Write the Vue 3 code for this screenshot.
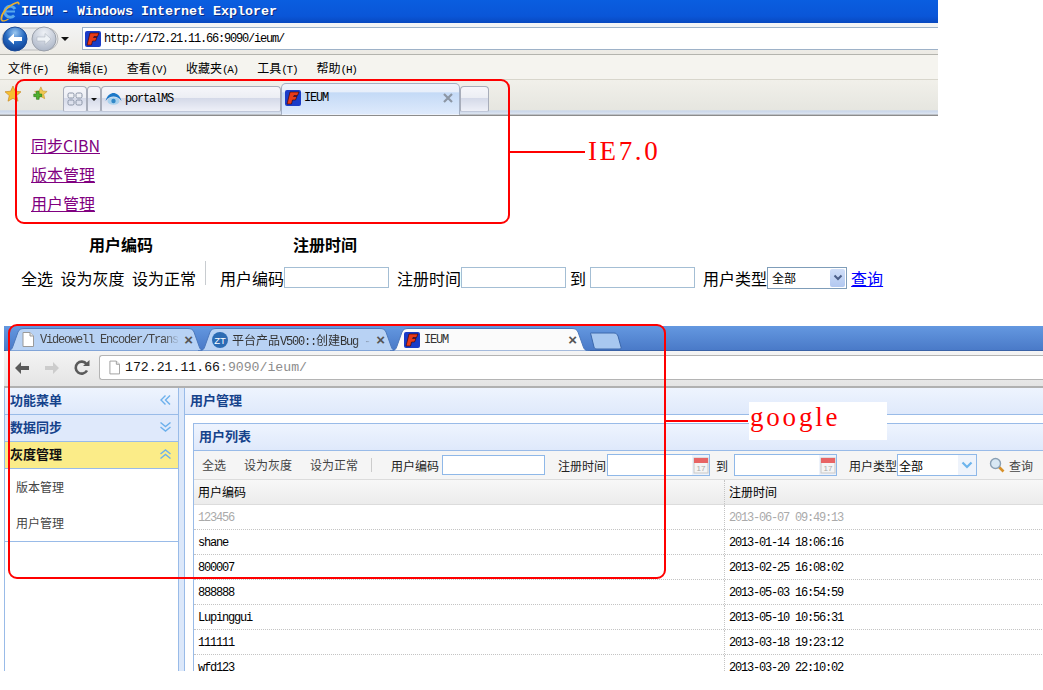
<script setup>
const ieMenu = [
  { name: "文件", key: "F" },
  { name: "编辑", key: "E" },
  { name: "查看", key: "V" },
  { name: "收藏夹", key: "A" },
  { name: "工具", key: "T" },
  { name: "帮助", key: "H" },
];

const ieLinks = ["同步CIBN", "版本管理", "用户管理"];

const users = [
  { code: "123456", time: "2013-06-07 09:49:13", gray: true },
  { code: "shane", time: "2013-01-14 18:06:16" },
  { code: "800007", time: "2013-02-25 16:08:02" },
  { code: "888888", time: "2013-05-03 16:54:59" },
  { code: "Lupinggui", time: "2013-05-10 10:56:31" },
  { code: "111111", time: "2013-03-18 19:23:12" },
  { code: "wfd123", time: "2013-03-20 22:10:02" },
];
</script>

<template>
  <div class="page">
    <!-- IE7 -->
    <div class="ie">
      <div class="ie-title">
        <svg width="20" height="22" viewBox="0 0 20 22">
          <path d="M15 8a5.500 5.500 0 1 0-.8 6.500" fill="none" stroke="#58a8ec" stroke-width="3" />
          <path d="M5.500 10.500h9.500" stroke="#58a8ec" stroke-width="2" />
          <path d="M1.500 19C.5 14 6 5 17 1.500c1.500-.4 2 .8 1.500 2" fill="none" stroke="#e8b030" stroke-width="1.800" />
          <path d="M1.500 19c1 1.500 4 1 7-1" fill="none" stroke="#e8b030" stroke-width="1.400" />
        </svg>
        <span class="ie-title-text">IEUM - Windows Internet Explorer</span>
      </div>
      <div class="ie-nav">
        <div class="orbs">
          <svg width="58" height="28" viewBox="0 0 58 28">
            <defs>
              <radialGradient id="orbBlue" cx="50%" cy="25%" r="80%">
                <stop offset="0" stop-color="#9cc8f0" />
                <stop offset="0.5" stop-color="#2468c0" />
                <stop offset="1" stop-color="#0c3c90" />
              </radialGradient>
              <radialGradient id="orbGray" cx="50%" cy="25%" r="80%">
                <stop offset="0" stop-color="#eef1f6" />
                <stop offset="1" stop-color="#a8b2c4" />
              </radialGradient>
            </defs>
            <rect x="1" y="3" width="56" height="22" rx="11" fill="#e6e8ea" stroke="#bcbcbc" />
            <circle cx="14" cy="14" r="12" fill="url(#orbBlue)" stroke="#1c4c98" />
            <path d="M7 14l6-5.500v3.500h8v4h-8v3.500z" fill="#fff" />
            <circle cx="43" cy="14" r="12" fill="url(#orbGray)" stroke="#9aa0aa" />
            <path d="M50 14l-6-5.500v3.500h-8v4h8v3.500z" fill="#eef2f6" stroke="#a6aeb8" stroke-width="0.5" />
          </svg>
          <span class="caret"></span>
        </div>
        <div class="ie-address">
          <svg class="fav" width="16" height="16" viewBox="0 0 16 16">
            <rect width="16" height="16" rx="2" fill="#1a3cc8" />
            <path d="M5 2h9l-1.500 3.500H9L8.500 6.500H12L10.500 10H7.500L6.500 14H2z" fill="#e83a18" stroke="#300" stroke-width="0.6" />
          </svg>
          <span class="mono">http://172.21.11.66:9090/ieum/</span>
        </div>
      </div>
      <div class="ie-menu">
        <span v-for="m in ieMenu" :key="m.key" class="ie-menu-item">{{ m.name }}<span class="mono menu-key">({{ m.key }})</span></span>
      </div>
      <div class="ie-tabs">
        <svg class="ie-star" width="18" height="18" viewBox="0 0 18 18">
          <path d="M9 1l2.300 5.200 5.700.6-4.300 3.800 1.300 5.600L9 13.300l-5 2.900 1.300-5.600L1 6.800l5.700-.6z" fill="#f6c030" stroke="#c88820" stroke-width="0.7" />
        </svg>
        <svg class="ie-star-add" width="16" height="16" viewBox="0 0 18 18">
          <path d="M10 1l2 4.600 5 .5-3.800 3.300 1.100 4.900L10 11.800l-4.300 2.500 1.100-4.900L3 6.100l5-.5z" fill="#f0c850" stroke="#c89830" stroke-width="0.7" />
          <path d="M5 6v3H2v3h3v3h3v-3h3V9H8V6z" fill="#50b030" stroke="#2c7c18" stroke-width="0.7" />
        </svg>
        <div class="ie-tab quick">
          <svg width="16" height="16" viewBox="0 0 16 16" fill="none" stroke="#8a94a6">
            <rect x="1" y="2" width="6" height="5" rx="1.500" />
            <rect x="9" y="2" width="6" height="5" rx="1.500" />
            <rect x="1" y="9" width="6" height="5" rx="1.500" />
            <rect x="9" y="9" width="6" height="5" rx="1.500" />
          </svg>
        </div>
        <div class="ie-tab drop"><span class="caret small"></span></div>
        <div class="ie-tab portal">
          <svg width="17" height="14" viewBox="0 0 17 14">
            <path d="M0.500 9C2 3 6 1 8.500 1S15 3 16.500 9C14 5.500 11 4.500 8.500 4.500S3 5.500.5 9z" fill="#1c78c8" />
            <ellipse cx="8.500" cy="9" rx="6" ry="3.800" fill="#a8d0ec" />
            <circle cx="8.500" cy="9" r="2.200" fill="#3088c8" />
          </svg>
          <span class="mono">portalMS</span>
        </div>
        <div class="ie-tab active">
          <svg class="fav" width="16" height="16" viewBox="0 0 16 16">
            <rect width="16" height="16" rx="2" fill="#1a3cc8" />
            <path d="M5 2h9l-1.500 3.500H9L8.500 6.500H12L10.500 10H7.500L6.500 14H2z" fill="#e83a18" stroke="#300" stroke-width="0.6" />
          </svg>
          <span class="mono grow">IEUM</span>
          <svg width="10" height="10" viewBox="0 0 10 10">
            <path d="M1 1l8 8M9 1l-8 8" stroke="#8c96a4" stroke-width="2.200" />
          </svg>
        </div>
        <div class="ie-tab blank"></div>
      </div>
    </div>

    <div class="ie-links">
      <a v-for="l in ieLinks" :key="l" class="ie-link">{{ l }}</a>
    </div>

    <div class="ie-thead">
      <span>用户编码</span>
      <span>注册时间</span>
    </div>

    <div class="ie-toolbar">
      <div class="ie-actions">
        <span>全选</span>
        <span>设为灰度</span>
        <span>设为正常</span>
      </div>
      <span class="ie-sep"></span>
      <label class="field">用户编码<input class="ie-input" /></label>
      <label class="field">注册时间<input class="ie-input" /></label>
      <span class="ie-to">到</span>
      <input class="ie-input" />
      <label class="field">用户类型
        <div class="ie-select">
          <span>全部</span>
          <span class="ie-select-btn">
            <svg width="10" height="8" viewBox="0 0 10 8">
              <path d="M1.500 1.500L5 5l3.500-3.500" fill="none" stroke="#4c5f88" stroke-width="2" />
            </svg>
          </span>
        </div>
      </label>
      <a class="ie-query">查询</a>
    </div>

    <!-- Chrome -->
    <div class="chrome">
      <div class="c-strip">
        <div class="c-tab">
          <svg class="c-tab-bg" viewBox="0 0 200 23" preserveAspectRatio="none">
            <path d="M0 23C5 23 6 21 7 18L12 4C13 1.500 15 .5 18 .5H182C185 .5 187 1.500 188 4L193 18C194 21 195 23 200 23z" fill="#b8d2f4" stroke="#4c78bc" />
          </svg>
          <span class="c-tab-icon">
            <svg width="12" height="15" viewBox="0 0 12 15">
              <path d="M1 .5h7l3.500 3.500v10.500H1z" fill="#fff" stroke="#9a9a9a" />
              <path d="M8 .5V4h3.500" fill="#e8e8e8" stroke="#9a9a9a" />
            </svg>
          </span>
          <span class="c-tab-title fade mono dim">Videowell Encoder/Trans</span>
          <span class="c-close">×</span>
        </div>
        <div class="c-tab">
          <svg class="c-tab-bg" viewBox="0 0 200 23" preserveAspectRatio="none">
            <path d="M0 23C5 23 6 21 7 18L12 4C13 1.500 15 .5 18 .5H182C185 .5 187 1.500 188 4L193 18C194 21 195 23 200 23z" fill="#b8d2f4" stroke="#4c78bc" />
          </svg>
          <span class="c-tab-icon">
            <svg width="16" height="16" viewBox="0 0 16 16">
              <circle cx="8" cy="8" r="8" fill="#2c6cb4" />
              <text x="8" y="11.500" text-anchor="middle" font-size="9.500" fill="#fff" font-family="Liberation Sans, sans-serif">ZT</text>
            </svg>
          </span>
          <span class="c-tab-title fade">平台产品<span class="mono">V500::</span>创建<span class="mono">Bug -</span></span>
          <span class="c-close">×</span>
        </div>
        <div class="c-tab on">
          <svg class="c-tab-bg" viewBox="0 0 200 23" preserveAspectRatio="none">
            <path d="M0 23C5 23 6 21 7 18L12 4C13 1.500 15 .5 18 .5H182C185 .5 187 1.500 188 4L193 18C194 21 195 23 200 23z" fill="#fbfbfb" stroke="#4c78bc" />
          </svg>
          <span class="c-tab-icon">
            <svg width="16" height="16" viewBox="0 0 16 16">
              <rect width="16" height="16" rx="2" fill="#1a3cc8" />
              <path d="M5 2h9l-1.500 3.500H9L8.500 6.500H12L10.500 10H7.500L6.500 14H2z" fill="#e83a18" stroke="#300" stroke-width="0.6" />
            </svg>
          </span>
          <span class="c-tab-title mono">IEUM</span>
          <span class="c-close">×</span>
        </div>
        <svg class="c-new" width="32" height="18" viewBox="0 0 32 18">
          <path d="M1 1H24C26 1 27 2 28 4L31 15C31.500 16.500 31 17 29 17H7C5 17 4.500 16.500 4 15L1 3C.7 1.500 0 1 1 1z" fill="#a8c8f0" stroke="#3c68ac" />
        </svg>
      </div>
      <div class="c-nav">
        <svg width="16" height="14" viewBox="0 0 16 14">
          <path d="M1 7l6-6v4h8v4H7v4z" fill="#5a5a5a" />
        </svg>
        <svg class="c-fwd" width="16" height="14" viewBox="0 0 16 14">
          <path d="M15 7L9 1v4H1v4h8v4z" fill="#cccccc" />
        </svg>
        <svg class="c-reload" width="16" height="16" viewBox="0 0 16 16">
          <path d="M13 10.500A6 6 0 1 1 12.500 4" fill="none" stroke="#5a5a5a" stroke-width="2.600" />
          <path d="M9 6h6.500V0z" fill="#5a5a5a" />
        </svg>
        <div class="c-address">
          <svg width="11" height="15" viewBox="0 0 12 15">
            <path d="M1 .5h7l3.500 3.500v10.500H1z" fill="#fff" stroke="#9a9a9a" />
            <path d="M8 .5V4h3.500" fill="#e8e8e8" stroke="#9a9a9a" />
          </svg>
          <span class="c-url">172.21.11.66<span class="c-url-rest">:9090/ieum/</span></span>
        </div>
      </div>

      <div class="c-body">
        <aside class="side">
          <div class="side-head">功能菜单
            <svg width="11" height="10" viewBox="0 0 11 10" fill="none" stroke="#6cb0ec" stroke-width="1.400">
              <path d="M5.500 .5L1 5l4.500 4.500M10 .5L5.500 5l4.500 4.500" />
            </svg>
          </div>
          <div class="side-head alt">数据同步
            <svg width="11" height="10" viewBox="0 0 11 10" fill="none" stroke="#6cb0ec" stroke-width="1.400">
              <path d="M.5 .5L5.500 4.500 10.500 .5M.5 5L5.500 9 10.500 5" />
            </svg>
          </div>
          <div class="side-head hot">灰度管理
            <svg width="11" height="10" viewBox="0 0 11 10" fill="none" stroke="#6cb0ec" stroke-width="1.400">
              <path d="M.5 5L5.500 1 10.500 5M.5 9.500L5.500 5.500 10.500 9.500" />
            </svg>
          </div>
          <div class="side-items">
            <div class="side-item">版本管理</div>
            <div class="side-item">用户管理</div>
          </div>
        </aside>
        <div class="split"></div>
        <main class="main">
          <div class="main-head">用户管理</div>
          <div class="panel">
            <div class="panel-head">用户列表</div>
            <div class="tools">
              <span class="tool">全选</span>
              <span class="tool">设为灰度</span>
              <span class="tool">设为正常</span>
              <span class="tool-sep"></span>
              <label class="t-field code">用户编码<input class="t-input" /></label>
              <label class="t-field">注册时间
                <span class="t-date">
                  <svg width="16" height="17" viewBox="0 0 16 17">
                    <rect x="1" y="1" width="14" height="15" fill="#f4f4f4" stroke="#c8c8c8" />
                    <rect x="1" y="1" width="14" height="5" fill="#e86464" />
                    <text x="8" y="14" text-anchor="middle" font-size="8" fill="#aaa" font-family="Liberation Sans, sans-serif">17</text>
                  </svg>
                </span>
              </label>
              <span class="t-to">到</span>
              <span class="t-date">
                <svg width="16" height="17" viewBox="0 0 16 17">
                  <rect x="1" y="1" width="14" height="15" fill="#f4f4f4" stroke="#c8c8c8" />
                  <rect x="1" y="1" width="14" height="5" fill="#e86464" />
                  <text x="8" y="14" text-anchor="middle" font-size="8" fill="#aaa" font-family="Liberation Sans, sans-serif">17</text>
                </svg>
              </span>
              <label class="t-field kind">用户类型
                <span class="t-select">
                  <span class="t-select-text">全部</span>
                  <span class="t-select-btn">
                    <svg width="12" height="8" viewBox="0 0 12 8">
                      <path d="M1.500 1.500L6 6l4.500-4.500" fill="none" stroke="#6cb4ec" stroke-width="2.200" />
                    </svg>
                  </span>
                </span>
              </label>
              <span class="t-query">
                <svg width="16" height="16" viewBox="0 0 16 16">
                  <path d="M10 10l4.500 4.500" stroke="#d89028" stroke-width="2.600" />
                  <circle cx="6.500" cy="6.500" r="5" fill="#d8e8f4" stroke="#8aa0b4" stroke-width="1.400" />
                </svg>
                查询
              </span>
            </div>
            <div class="grid-head">
              <span class="col-a">用户编码</span>
              <span class="col-b">注册时间</span>
            </div>
            <div v-for="u in users" :key="u.code" class="grid-row" :class="{ gray: u.gray }">
              <span class="col-a mono">{{ u.code }}</span>
              <span class="col-b mono">{{ u.time }}</span>
            </div>
          </div>
        </main>
      </div>
    </div>

    <!-- annotations drawn over the screenshots -->
    <div class="mark mark-ie"></div>
    <div class="mark-line line-ie"></div>
    <div class="mark-text text-ie">IE7.0</div>
    <div class="mark mark-chrome"></div>
    <div class="mark-line line-chrome"></div>
    <div class="mark-text text-chrome">google</div>
  </div>
</template>

<style>
html,
body {
  margin: 0;
  background: #fff;
}
</style>

<style scoped>
.page {
  position: relative;
  width: 1043px;
  height: 690px;
  overflow: hidden;
  background: #fff;
  color: #000;
  font-family: "Noto Sans CJK SC", "Liberation Sans", sans-serif;
  font-size: 12px;
}

.mono {
  font-family: "Liberation Mono", monospace;
  font-size: 12px;
  letter-spacing: -1.2px;
}

.ie {
  width: 938px;
}

.ie-title {
  height: 23px;
  display: flex;
  align-items: center;
  gap: 1px;
  background: linear-gradient(#0a5ee0, #0a56d8 70%, #0848c0);
}

.ie-title-text {
  font-family: "Liberation Mono", monospace;
  font-weight: bold;
  font-size: 13.33px;
  color: #fff;
  text-shadow: 1px 1px 0 #0a2a80;
}

.ie-nav {
  height: 32px;
  box-sizing: border-box;
  display: flex;
  align-items: center;
  padding-left: 1px;
  background: linear-gradient(#f4f5f6, #eceae4);
  border-bottom: 1px solid #b4b4ae;
}

.orbs {
  display: flex;
  align-items: center;
  gap: 2px;
  width: 81px;
}

.caret {
  width: 0;
  height: 0;
  border-left: 4px solid transparent;
  border-right: 4px solid transparent;
  border-top: 4px solid #111;
}

.caret.small {
  border-left-width: 3px;
  border-right-width: 3px;
  border-top-width: 3px;
}

.ie-address {
  flex: 1;
  height: 23px;
  box-sizing: border-box;
  display: flex;
  align-items: center;
  gap: 3px;
  padding-left: 2px;
  background: #fff;
  border: 1px solid #9eb2c8;
  border-right: 0;
}

.ie-menu {
  height: 25px;
  box-sizing: border-box;
  display: flex;
  align-items: center;
  gap: 18px;
  padding-left: 8px;
  background: #f5f4ef;
  border-bottom: 1px solid #d8d6cc;
}

.ie-menu-item {
  white-space: nowrap;
}

.menu-key {
  font-size: 11px;
  letter-spacing: -1.27px;
  padding-right: 1.3px;
}

.ie-tabs {
  height: 36px;
  box-sizing: border-box;
  display: flex;
  align-items: flex-end;
  padding-left: 4px;
  background: linear-gradient(#f1f0ea 0, #e6e6e0 82%, #c9d6ea 86%, #dfe6f0 95%, #8c8c8c 97%);
}

.ie-star {
  align-self: flex-start;
  margin-top: 5px;
}

.ie-star-add {
  align-self: flex-start;
  margin: 6px 0 0 10px;
}

.ie-tab {
  height: 26px;
  margin-bottom: 4px;
  box-sizing: border-box;
  display: flex;
  align-items: center;
  border: 1px solid #a8adba;
  border-bottom-color: #c0c8da;
  border-radius: 4px 4px 2px 2px;
  background: linear-gradient(#f6f6fa 0, #eceef4 45%, #d4d9e8 46%, #eef0f8 100%);
}

.quick {
  width: 24px;
  margin-left: 15px;
  justify-content: center;
}

.drop {
  width: 14px;
  justify-content: center;
}

.portal {
  width: 180px;
  gap: 3px;
  padding-left: 3px;
}

.active {
  width: 179px;
  height: 32px;
  margin-bottom: 1px;
  gap: 3px;
  padding: 0 6px 2px 3px;
  border-color: #a4b0c4;
  border-bottom-color: transparent;
  border-radius: 5px 5px 0 0;
  background: linear-gradient(#eef3fb 0, #e8effa 25%, #c4daf6 30%, #deeafc 100%);
}

.grow {
  flex: 1;
}

.blank {
  width: 29px;
}

.ie-links {
  display: flex;
  flex-direction: column;
  align-items: flex-start;
  padding: 15px 0 0 31px;
}

.ie-link {
  font-size: 16px;
  line-height: 29px;
  color: #800080;
  text-decoration: underline;
}

.ie-thead {
  display: flex;
  gap: 140px;
  height: 22px;
  line-height: 22px;
  margin-top: 15px;
  padding-left: 89px;
  font-size: 16px;
  font-weight: bold;
}

.ie-toolbar {
  height: 29px;
  margin-top: 8px;
  display: flex;
  align-items: center;
  gap: 8px;
  padding-left: 21px;
  font-size: 16px;
}

.ie-actions {
  display: flex;
  gap: 7.5px;
}

.ie-sep {
  width: 1px;
  height: 24px;
  margin: -10px 6px 0 1px;
  background: #c8ccd0;
}

.field {
  display: flex;
  align-items: center;
  white-space: nowrap;
}

.ie-input {
  width: 105px;
  height: 21px;
  box-sizing: border-box;
  margin: 0;
  padding: 0;
  border: 1px solid #a4bed4;
  background: #fff;
}

.ie-to {
  margin: 0 -4px;
}

.ie-select {
  width: 80px;
  height: 22px;
  box-sizing: border-box;
  display: flex;
  align-items: center;
  justify-content: space-between;
  padding: 1px 1px 1px 4px;
  border: 1px solid #7f9db9;
  font-size: 12px;
}

.ie-select-btn {
  width: 15px;
  height: 18px;
  display: flex;
  align-items: center;
  justify-content: center;
  border-radius: 2px;
  background: linear-gradient(#d0def8, #b2c8f0);
}

.ie-query {
  margin-left: -4px;
  color: #0000ff;
  text-decoration: underline;
}

.chrome {
  margin: 34px 0 0 4px;
}

.c-strip {
  height: 25px;
  box-sizing: border-box;
  display: flex;
  align-items: flex-end;
  padding-left: 2px;
  background: linear-gradient(#6498e0, #4a7ac8);
  border-bottom: 1px solid #3a62a6;
}

.c-tab {
  position: relative;
  width: 200px;
  height: 23px;
  margin: 0 -8px -1px 0;
  box-sizing: border-box;
  display: flex;
  align-items: center;
  gap: 4px;
  padding: 0 13px 0 14px;
}

.c-tab.on {
  z-index: 1;
}

.c-tab-bg {
  position: absolute;
  top: 0;
  left: 0;
  width: 100%;
  height: 100%;
}

.c-tab-icon,
.c-tab-title,
.c-close {
  position: relative;
}

.c-tab-icon {
  width: 16px;
  display: flex;
  justify-content: center;
  flex-shrink: 0;
}

.c-tab-title {
  flex: 1;
  overflow: hidden;
  white-space: nowrap;
  color: #333;
}

.fade {
  -webkit-mask-image: linear-gradient(to right, #000 88%, transparent);
  mask-image: linear-gradient(to right, #000 88%, transparent);
}

.dim {
  color: #444;
}

.c-close {
  font-family: "Liberation Sans", sans-serif;
  font-size: 15px;
  font-weight: bold;
  line-height: 15px;
  color: #555;
}

.c-new {
  margin: 0 0 0 8px;
  align-self: flex-end;
}

.c-nav {
  height: 37px;
  box-sizing: border-box;
  display: flex;
  align-items: center;
  padding: 0 0 2px 10px;
  background: linear-gradient(#f4f4f4, #e4e4e4);
  border-bottom: 2px solid #b0b0b0;
}

.c-fwd {
  margin-left: 14px;
}

.c-reload {
  margin-left: 14px;
}

.c-address {
  flex: 1;
  height: 25px;
  margin-left: 9px;
  box-sizing: border-box;
  display: flex;
  align-items: center;
  gap: 5px;
  padding-left: 9px;
  background: #fff;
  border: 1px solid #b4b4b4;
  border-right: 0;
  border-radius: 3px 0 0 3px;
}

.c-url {
  font-family: "Liberation Mono", monospace;
  font-size: 13.2px;
  color: #111;
}

.c-url-rest {
  color: #8c8c8c;
}

.c-body {
  height: 283px;
  display: flex;
  overflow: hidden;
}

.side {
  width: 175px;
  box-sizing: border-box;
  border-left: 1px solid #99bbe8;
  border-right: 1px solid #99bbe8;
}

.side-head {
  height: 27px;
  box-sizing: border-box;
  display: flex;
  align-items: center;
  justify-content: space-between;
  padding: 0 7px 3px 5px;
  font-size: 13px;
  font-weight: bold;
  color: #15428b;
  background: linear-gradient(#eef4fe, #dfe9fb);
  border-bottom: 1px solid #99bbe8;
}

.side-head.alt {
  background: #dfe9fb;
}

.side-head.hot {
  color: #111;
  background: #fbec88;
}

.side-items {
  border-bottom: 1px solid #99bbe8;
}

.side-item {
  height: 36px;
  line-height: 35px;
  padding-left: 11px;
  color: #444;
}

.split {
  width: 5px;
  background: #dce8fa;
}

.main {
  flex: 1;
  min-width: 0;
  border-left: 1px solid #99bbe8;
  overflow: hidden;
}

.main-head {
  height: 27px;
  box-sizing: border-box;
  line-height: 23px;
  padding-left: 5px;
  font-size: 13px;
  font-weight: bold;
  color: #15428b;
  background: linear-gradient(#eef4fe, #dfe9fb);
  border-bottom: 1px solid #99bbe8;
}

.panel {
  margin: 8px 0 0 8px;
  width: 900px;
  border-left: 1px solid #99bbe8;
  border-top: 1px solid #99bbe8;
}

.panel-head {
  height: 27px;
  box-sizing: border-box;
  line-height: 24px;
  padding-left: 5px;
  font-size: 13px;
  font-weight: bold;
  color: #15428b;
  background: linear-gradient(#eef4fe, #dfe9fb);
  border-bottom: 1px solid #99bbe8;
}

.tools {
  height: 29px;
  box-sizing: border-box;
  display: flex;
  align-items: center;
  padding-left: 8px;
  background: #f5f5f5;
  border-bottom: 1px solid #dcdcdc;
  color: #444;
}

.tool {
  margin-right: 18px;
  margin-top: -1px;
}

.tool-sep {
  width: 1px;
  height: 14px;
  margin: 0 19px 0 -5px;
  background: #ccc;
}

.t-field {
  display: flex;
  align-items: center;
  gap: 1px;
  color: #222;
  white-space: nowrap;
}

.t-field.code {
  gap: 3px;
  margin-right: 13px;
}

.t-field.kind {
  margin-left: 12px;
  gap: 0;
}

.t-input {
  width: 103px;
  height: 20px;
  box-sizing: border-box;
  margin: 0;
  padding: 0;
  border: 1px solid #8fb8e8;
  background: #fff;
}

.t-date {
  width: 103px;
  height: 22px;
  box-sizing: border-box;
  display: flex;
  align-items: center;
  justify-content: flex-end;
  border: 1px solid #8fb8e8;
  background: linear-gradient(to left, #eef3fb 17px, #fff 17px);
}

.t-to {
  margin: 0 6px;
  color: #222;
}

.t-select {
  width: 80px;
  height: 22px;
  box-sizing: border-box;
  display: flex;
  align-items: center;
  justify-content: space-between;
  border: 1px solid #8fb8e8;
  background: #fff;
}

.t-select-text {
  padding-left: 1px;
  color: #000;
}

.t-select-btn {
  width: 18px;
  height: 100%;
  display: flex;
  align-items: center;
  justify-content: center;
  background: #eef3fb;
}

.t-query {
  display: flex;
  align-items: center;
  gap: 4px;
  margin-left: 12px;
}

.grid-head {
  height: 25px;
  box-sizing: border-box;
  display: flex;
  align-items: stretch;
  background: linear-gradient(#f8f8f8, #ececec);
  border-bottom: 1px solid #dcdcdc;
}

.grid-head span {
  line-height: 23px;
}

.grid-row {
  height: 25px;
  box-sizing: border-box;
  display: flex;
  align-items: stretch;
  border-bottom: 1px dotted #c4c4c4;
}

.grid-row.gray {
  color: #aaa;
}

.col-a {
  width: 530px;
  box-sizing: border-box;
  padding-left: 4px;
  line-height: 26px;
}

.col-b {
  flex: 1;
  box-sizing: border-box;
  padding-left: 4px;
  line-height: 26px;
  border-left: 1px dotted #c4c4c4;
}

.mark {
  position: absolute;
  box-sizing: border-box;
  border: 2px solid #ff0000;
  border-radius: 9px;
}

.mark-ie {
  left: 15px;
  top: 79px;
  width: 495px;
  height: 145px;
}

.mark-chrome {
  left: 8px;
  top: 324px;
  width: 658px;
  height: 255px;
}

.mark-line {
  position: absolute;
  height: 2px;
  background: #ff0000;
}

.line-ie {
  left: 510px;
  top: 151px;
  width: 75px;
}

.line-chrome {
  left: 666px;
  top: 420px;
  width: 82px;
}

.mark-text {
  position: absolute;
  font-family: "Liberation Serif", serif;
  font-size: 27px;
  color: #ff0000;
  white-space: nowrap;
}

.text-ie {
  left: 588px;
  top: 136px;
  line-height: 31px;
  letter-spacing: 2.6px;
}

.text-chrome {
  left: 749px;
  top: 402px;
  width: 138px;
  height: 38px;
  line-height: 30px;
  padding-left: 1px;
  box-sizing: border-box;
  background: #fff;
  letter-spacing: 2.8px;
}
</style>
